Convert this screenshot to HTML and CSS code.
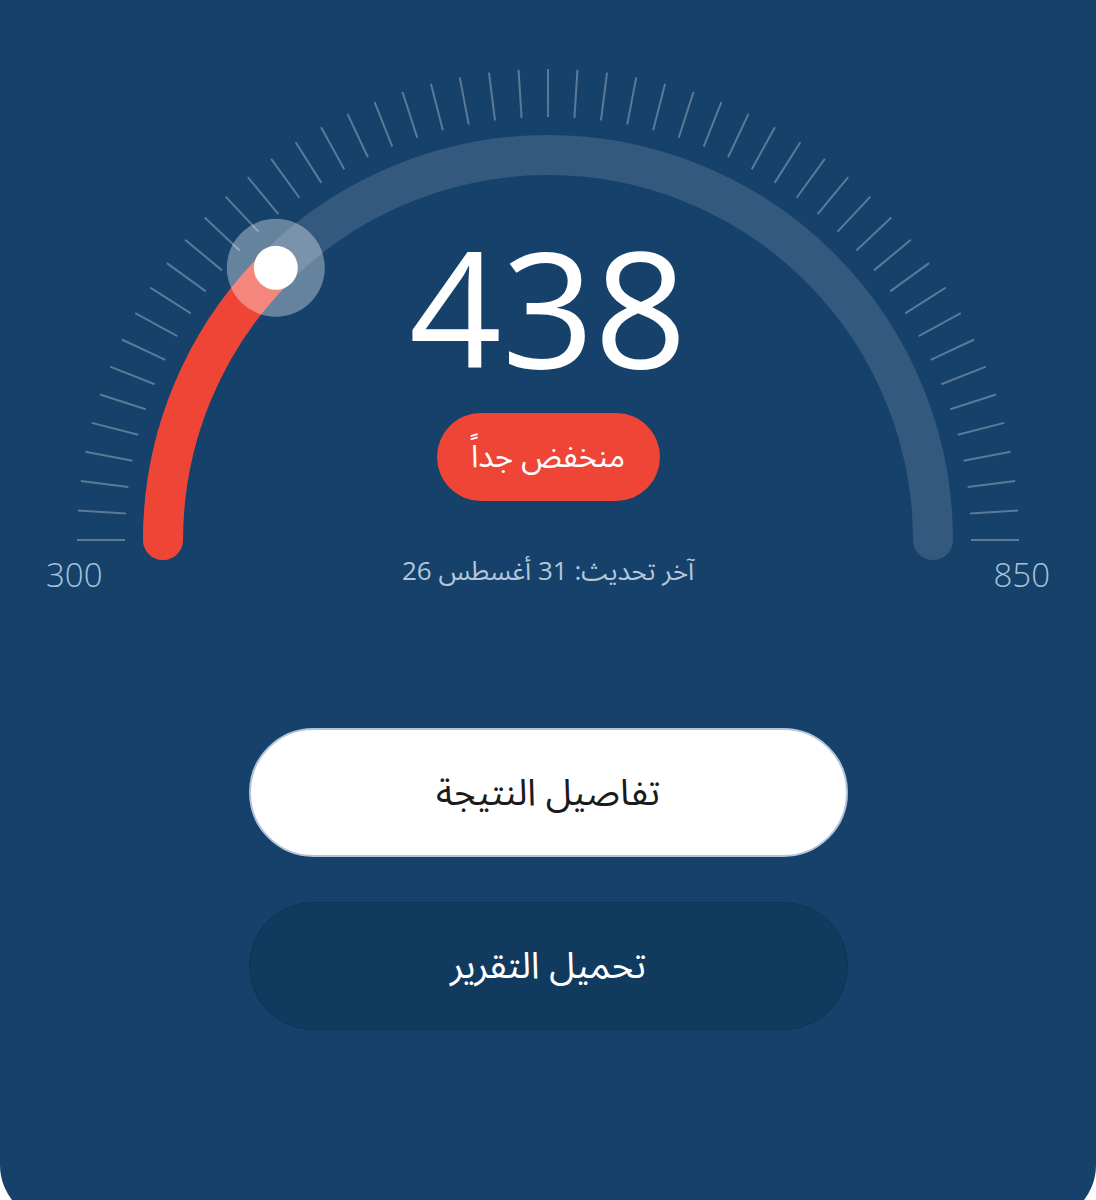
FILE: index.html
```html
<!DOCTYPE html>
<html lang="ar" dir="rtl">
<head>
    <meta charset="utf-8">
    <title>التقييم الائتماني</title>
    <link rel="stylesheet" href="styles.css">
</head>
<body>
    <div class="score-card">
        <div class="gauge">
            <svg class="gauge-dial" width="1096" height="600" viewBox="0 0 1096 600">
                <defs>
                    <clipPath id="upperHalf">
                        <rect x="0" y="0" width="1096" height="541"/>
                    </clipPath>
                </defs>
                <!-- 51 ticks, one every 3.6deg, drawn as dashes of a thick ring -->
                <circle class="dial-ticks" cx="548" cy="540" r="447" pathLength="100"
                        stroke-dasharray="0.0712 0.9288" stroke-dashoffset="0.0356"
                        clip-path="url(#upperHalf)"/>
                <path class="dial-track" d="M 163 540 A 385 385 0 0 1 933 540"/>
                <!-- 438 on a 300..850 scale = 45deg of the half circle -->
                <path class="dial-value" d="M 163 540 A 385 385 0 0 1 275.8 267.8"/>
                <circle class="dial-halo" cx="275.8" cy="267.8" r="49"/>
                <circle class="dial-knob" cx="275.8" cy="267.8" r="22"/>
            </svg>

            <div class="gauge-readout">
                <div class="score">438</div>
                <div class="badge">منخفض جداً</div>
                <div class="updated">آخر تحديث: 31 أغسطس 26</div>
            </div>

            <div class="gauge-scale">
                <span>300</span>
                <span>850</span>
            </div>
        </div>

        <div class="actions">
            <button class="btn btn-primary">تفاصيل النتيجة</button>
            <button class="btn btn-secondary">تحميل التقرير</button>
        </div>
    </div>
</body>
</html>
```

FILE: styles.css
```css
html, body {
    height: 100%;
    overflow: hidden;
}

body {
    margin: 0;
    background-color: #ffffff;
    font-family: "Open Sans", "Noto Sans Arabic", "DejaVu Sans", sans-serif;
}

.score-card {
    height: 1222px;
    background-color: #15416b;
    border-radius: 0 0 57px 57px;
}

/* gauge: svg dial with the readout stacked on top of it */
.gauge {
    display: grid;
}

.gauge > * {
    grid-area: 1 / 1;
}

.gauge-dial {
    display: block;
}

.dial-ticks {
    fill: none;
    stroke: rgba(255, 255, 255, 0.3);
    stroke-width: 48;
}

.dial-track,
.dial-value {
    fill: none;
    stroke-width: 40;
    stroke-linecap: round;
}

.dial-track {
    stroke: rgba(255, 255, 255, 0.13);
}

.dial-value {
    stroke: #ef4537;
}

.dial-halo {
    fill: rgba(255, 255, 255, 0.35);
}

.dial-knob {
    fill: #ffffff;
}

.gauge-readout {
    display: flex;
    flex-direction: column;
    align-items: center;
    padding-top: 224px;
}

.score {
    font-size: 162px;
    font-weight: 500;
    line-height: 1;
    color: #ffffff;
}

.badge {
    display: flex;
    align-items: center;
    justify-content: center;
    width: 223px;
    height: 88px;
    margin-top: 27px;
    border-radius: 44px;
    background-color: #ef4537;
    color: #ffffff;
    font-size: 31px;
}

.updated {
    margin-top: 56px;
    font-size: 26px;
    line-height: 1;
    color: #b4c6d8;
}

.gauge-scale {
    align-self: start;
    direction: ltr;
    display: flex;
    justify-content: space-between;
    padding: 558px 46px 0;
    font-size: 33px;
    font-weight: 300;
    line-height: 1;
    color: #a9c1d8;
}

/* buttons */
.actions {
    display: flex;
    flex-direction: column;
    align-items: center;
    gap: 45px;
    margin-top: 128px;
}

.btn {
    box-sizing: border-box;
    width: 599px;
    height: 129px;
    border-radius: 65px;
    font-family: inherit;
    font-size: 37px;
    cursor: pointer;
}

.btn-primary {
    background-color: #ffffff;
    color: #1b1b1b;
    border: 2px solid #b3c4d9;
}

.btn-secondary {
    height: 128px;
    background-color: #113a5f;
    color: #ffffff;
    border: 1px solid #0f3456;
}
```
